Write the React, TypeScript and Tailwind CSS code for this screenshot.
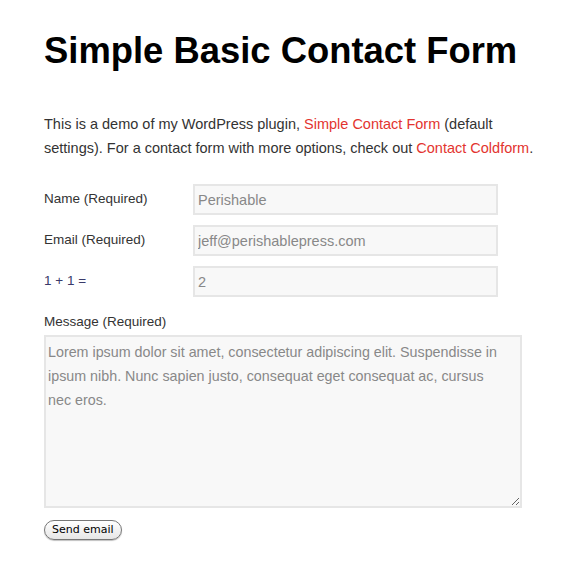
export default function App() {
  return (
    <div className="min-h-[570px] w-[576px] bg-white pl-[44px] pt-[31px] text-[#333] font-['Liberation_Sans',Arial,sans-serif]">
      <h1 className="text-[36.4px] font-bold leading-[40px] text-black">
        Simple Basic Contact Form
      </h1>
      <p className="mt-[41px] w-[510px] text-[14.5px] leading-[24px]">
        This is a demo of my WordPress plugin,{' '}
        <a href="#" className="text-[#e3342f]">Simple Contact Form</a> (default settings). For a
        contact form with more options, check out{' '}
        <a href="#" className="text-[#e3342f]">Contact Coldform</a>.
      </p>

      <form className="mt-[24px]" onSubmit={(e) => e.preventDefault()}>
        <div className="flex flex-col gap-[10px]">
          <div className="flex">
            <label className="w-[149px] pt-[6px] text-[13.5px] leading-[18px]">Name (Required)</label>
            <input
              defaultValue="Perishable"
              className="h-[31px] w-[305px] border-2 border-[#e6e6e6] bg-[#f8f8f8] px-[3px] text-[14.5px] text-[#888] outline-none"
            />
          </div>
          <div className="flex">
            <label className="w-[149px] pt-[6px] text-[13.5px] leading-[18px]">Email (Required)</label>
            <input
              defaultValue="jeff@perishablepress.com"
              className="h-[31px] w-[305px] border-2 border-[#e6e6e6] bg-[#f8f8f8] px-[3px] text-[14.5px] text-[#888] outline-none"
            />
          </div>
          <div className="flex">
            <label className="w-[149px] pt-[6px] text-[13.5px] leading-[18px] text-[#3a3a6a]">1 + 1 =</label>
            <input
              defaultValue="2"
              className="h-[31px] w-[305px] border-2 border-[#e6e6e6] bg-[#f8f8f8] px-[3px] text-[14.5px] text-[#888] outline-none"
            />
          </div>
        </div>

        <label className="mt-[16px] block text-[13.5px] leading-[18px]">Message (Required)</label>
        <textarea
          defaultValue={
            'Lorem ipsum dolor sit amet, consectetur adipiscing elit. Suspendisse in ipsum nibh. Nunc sapien justo, consequat eget consequat ac, cursus\nnec eros.'
          }
          className="mt-[4px] block h-[173px] w-[478px] resize overflow-hidden border-2 border-[#e6e6e6] bg-[#f8f8f8] pl-[2px] pr-[4px] py-[3px] text-[14.3px] leading-[24px] text-[#888] outline-none"
        />

        <button
          type="submit"
          className="mt-[12px] h-[20px] rounded-full border border-[#777] bg-gradient-to-b from-white to-[#e6e6e6] px-[7px] text-[11px] leading-[18px] text-black shadow-[0_1px_1px_rgba(0,0,0,0.25)] font-['DejaVu_Sans',sans-serif]"
        >
          Send email
        </button>
      </form>
    </div>
  );
}
